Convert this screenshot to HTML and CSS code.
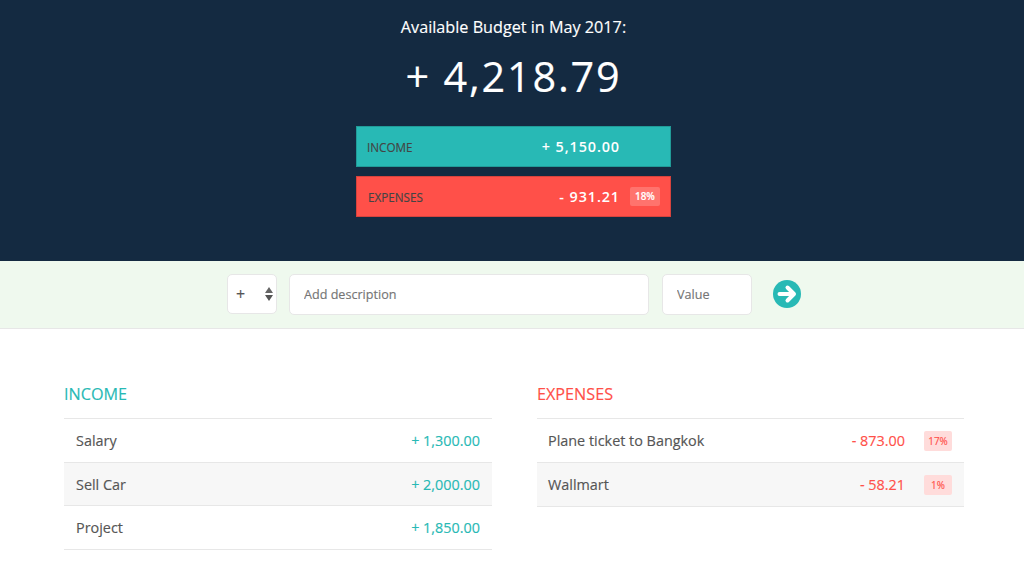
FILE: index.html
```
<!DOCTYPE html>
<html lang="en">
<head>
<meta charset="utf-8">
<title>Budget</title>
<link rel="stylesheet" href="styles.css">
</head>
<body>
<header class="top">
  <div class="budget-title">Available Budget in May 2017:</div>
  <div class="budget-value">+ 4,218.79</div>
  <div class="summary summary-income">
    <span class="summary-label">INCOME</span>
    <div class="summary-right"><span class="summary-value">+ 5,150.00</span><span class="summary-pct summary-pct-empty"></span></div>
  </div>
  <div class="summary summary-expenses">
    <span class="summary-label">EXPENSES</span>
    <div class="summary-right"><span class="summary-value">- 931.21</span><span class="summary-pct">18%</span></div>
  </div>
</header>
<section class="add">
  <div class="add-type"><span>+</span>
    <svg class="add-arrows" width="8" height="14" viewBox="0 0 8 14"><path d="M4 0 8 6H0z" fill="#666"/><path d="M0 8h8l-4 6z" fill="#555"/></svg>
  </div>
  <input class="add-input add-desc" type="text" placeholder="Add description">
  <input class="add-input add-value" type="text" placeholder="Value">
  <svg class="add-btn" width="28" height="28" viewBox="0 0 28 28"><circle cx="14" cy="14" r="14" fill="#28b9b5"/><path d="M6.500 14H20M14.500 7.500 21 14l-6.500 6.500" fill="none" stroke="#fff" stroke-width="4" stroke-linecap="round" stroke-linejoin="round"/></svg>
</section>
<main class="lists">
  <section class="col col-income">
    <h2 class="col-title income">INCOME</h2>
    <div class="row"><span>Salary</span><div class="row-right"><span class="row-value income">+ 1,300.00</span></div></div>
    <div class="row"><span>Sell Car</span><div class="row-right"><span class="row-value income">+ 2,000.00</span></div></div>
    <div class="row"><span>Project</span><div class="row-right"><span class="row-value income">+ 1,850.00</span></div></div>
  </section>
  <section class="col col-expenses">
    <h2 class="col-title expenses">EXPENSES</h2>
    <div class="row"><span>Plane ticket to Bangkok</span><div class="row-right"><span class="row-value expenses">- 873.00</span><span class="row-pct">17%</span></div></div>
    <div class="row"><span>Wallmart</span><div class="row-right"><span class="row-value expenses">- 58.21</span><span class="row-pct">1%</span></div></div>
  </section>
</main>
</body>
</html>
```
FILE: styles.css
```
* { box-sizing: border-box; margin: 0; padding: 0; }
html, body { height: 100%; }
body {
  font-family: "Open Sans", "Liberation Sans", sans-serif;
  font-size: 14.400px;
  color: #555;
  background: #fff;
  overflow: hidden;
  -webkit-text-stroke: 0.15px;
}
.top {
  height: 261px;
  background: #142a41;
  color: #fff;
  padding-top: 16px;
  padding-left: 3px;
  display: flex;
  flex-direction: column;
  align-items: center;
}
.budget-title { font-size: 16.200px; line-height: 22px; }
.budget-value {
  font-size: 41.400px;
  font-weight: 400;
  letter-spacing: 1.800px;
  line-height: 56px;
  margin-top: 10px;
  margin-bottom: 22px;
}
.summary {
  width: 315px;
  height: 41px;
  display: flex;
  align-items: center;
  justify-content: space-between;
  padding: 0 10px 0 10px;
  border: 1px solid rgba(0,0,0,0.16);
  margin-bottom: 9px;
}
.summary-income { background: #28b9b5; }
.summary-expenses { background: #ff5049; }
.summary-label { font-size: 11.700px; color: #444; }
.summary-expenses .summary-label { margin-left: 1px; }
.summary-right { display: flex; align-items: center; }
.summary-value { font-size: 14.400px; font-weight: 600; letter-spacing: 0.900px; color: #fff; -webkit-text-stroke: 0; }
.summary-pct {
  width: 30px;
  height: 19px;
  margin-left: 10px;
  border-radius: 2px;
  background: rgba(255,255,255,0.2);
  font-size: 9.900px;
  font-weight: 600;
  line-height: 19px;
  text-align: center;
  color: #fff;
}
.summary-pct-empty { background: none; }
.add {
  height: 68px;
  background: #eff9ee;
  border-bottom: 1px solid #e7e7e7;
  padding-left: 227px;
  display: flex;
  align-items: center;
}
.add-type {
  width: 50px;
  height: 40px;
  margin-top: -1px;
  background: #fff;
  border: 1px solid #e7e7e7;
  border-radius: 5px;
  display: flex;
  align-items: center;
  justify-content: space-between;
  padding: 0 3px 0 8px;
  font-size: 16px;
  color: #555;
}
.add-input {
  height: 41px;
  background: #fff;
  border: 1px solid #e7e7e7;
  border-radius: 5px;
  font-family: inherit;
  font-size: 12.600px;
  color: #555;
  padding: 0 14px;
  outline: none;
}
.add-input::placeholder { color: #757575; opacity: 1; }
.add-desc { width: 360px; margin-left: 12px; }
.add-value { width: 90px; margin-left: 13px; }
.add-btn { margin-left: 21px; margin-top: -2px; }
.lists {
  display: flex;
  gap: 45px;
  padding: 54px 60px 0 64px;
}
.col { width: 428px; }
.col-expenses { width: 427px; }
.col-title {
  font-size: 16.200px;
  font-weight: 400;
  line-height: 22px;
  padding-bottom: 13px;
  border-bottom: 1px solid #e7e7e7;
}
.income { color: #28b9b5; }
.expenses { color: #ff5049; }
.row {
  height: 44px;
  display: flex;
  align-items: center;
  justify-content: space-between;
  padding: 0 12px 0 11px;
  border-bottom: 1px solid #e7e7e7;
}
.col-income .row { padding-left: 12px; }
.col-income .row:nth-child(3) { height: 43px; }
.row:nth-child(odd) { background: #f7f7f7; }
.row-right { display: flex; align-items: center; }
.row-value { font-size: 14.400px; }
.row-pct {
  width: 28px;
  height: 20px;
  margin-left: 19px;
  border-radius: 2px;
  background: #ffdcdb;
  color: #ff5049;
  font-size: 9.900px;
  line-height: 20px;
  text-align: center;
}
```
